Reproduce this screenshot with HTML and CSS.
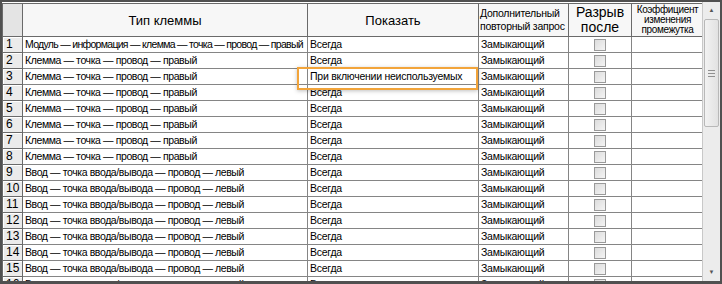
FILE: index.html
```html
<!DOCTYPE html>
<html lang="ru">

<head>
    <meta charset="UTF-8">
    <title>Типы клемм</title>
    <link rel="stylesheet" href="styles.css">
</head>

<body>
    <div class="frame">
        <div class="grid-area">
            <table class="grid">
                <colgroup>
                    <col class="c-num">
                    <col class="c-type">
                    <col class="c-show">
                    <col class="c-extra">
                    <col class="c-break">
                    <col class="c-coef">
                </colgroup>
                <thead>
                    <tr>
                        <th class="corner"></th>
                        <th class="h-big">Тип клеммы</th>
                        <th class="h-big">Показать</th>
                        <th class="h-small">Дополнительный<br>повторный запрос</th>
                        <th class="h-big h-break">Разрыв<br>после</th>
                        <th class="h-tiny">Коэффициент<br>изменения<br>промежутка</th>
                    </tr>
                </thead>
                <tbody id="rows"></tbody>
            </table>
            <div class="highlight"></div>
        </div>
        <div class="scrollbar">
            <div class="sb-btn">&#9650;</div>
            <div class="sb-thumb"><span class="grip"></span></div>
            <div class="sb-track"></div>
            <div class="sb-btn">&#9660;</div>
        </div>
    </div>

    <script>
        var rows = [
            ['Модуль — информация — клемма — точка — провод — правый', 'Всегда'],
            ['Клемма — точка — провод — правый', 'Всегда'],
            ['Клемма — точка — провод — правый', 'При включении неиспользуемых'],
            ['Клемма — точка — провод — правый', 'Всегда'],
            ['Клемма — точка — провод — правый', 'Всегда'],
            ['Клемма — точка — провод — правый', 'Всегда'],
            ['Клемма — точка — провод — правый', 'Всегда'],
            ['Клемма — точка — провод — правый', 'Всегда'],
            ['Ввод — точка ввода/вывода — провод — левый', 'Всегда'],
            ['Ввод — точка ввода/вывода — провод — левый', 'Всегда'],
            ['Ввод — точка ввода/вывода — провод — левый', 'Всегда'],
            ['Ввод — точка ввода/вывода — провод — левый', 'Всегда'],
            ['Ввод — точка ввода/вывода — провод — левый', 'Всегда'],
            ['Ввод — точка ввода/вывода — провод — левый', 'Всегда'],
            ['Ввод — точка ввода/вывода — провод — левый', 'Всегда'],
            ['Ввод — точка ввода/вывода — провод — левый', 'Всегда']
        ];

        var body = document.getElementById('rows');
        rows.forEach(function (r, i) {
            var tr = document.createElement('tr');
            var typeClass = r[0].length > 45 ? 'type tight' : 'type';
            tr.innerHTML =
                '<td class="num">' + (i + 1) + '</td>' +
                '<td class="' + typeClass + '">' + r[0] + '</td>' +
                '<td>' + r[1] + '</td>' +
                '<td>Замыкающий</td>' +
                '<td class="chk"><span class="box"></span></td>' +
                '<td></td>';
            body.appendChild(tr);
        });
    </script>
</body>

</html>
```

FILE: styles.css
```css
body {
    margin: 0;
    background: #ffffff;
    font-family: "Liberation Sans", Arial, sans-serif;
}

.frame {
    width: 718px;
    height: 279px;
    border: 2px solid #505050;
    border-bottom-width: 3px;
    background: #ffffff;
    display: flex;
    overflow: hidden;
}

.grid-area {
    position: relative;
    width: 701px;
    overflow: hidden;
}

.grid {
    border-collapse: collapse;
    table-layout: fixed;
    width: 702px;
    margin-top: 1px;
}

.c-num { width: 20px; }
.c-type { width: 285px; }
.c-show { width: 171px; }
.c-extra { width: 90px; }
.c-break { width: 63px; }
.c-coef { width: 72px; }

.grid th {
    height: 31px;
    padding: 0;
    border: 1px solid #6a6a6a;
    background: #f7f7f7;
    font-weight: normal;
    color: #000000;
    text-align: center;
    white-space: nowrap;
    overflow: hidden;
}

.grid th.corner {
    background: #e4e4e4;
}

.h-big {
    font-size: 13px;
    line-height: 15px;
}

.grid th.h-break {
    font-size: 14px;
}

.grid th.h-small {
    font-size: 10.5px;
    letter-spacing: -0.25px;
    text-align: left;
    line-height: 13px;
    padding-left: 1px;
}

.grid th.h-tiny {
    font-size: 10px;
    letter-spacing: -0.35px;
    line-height: 10px;
    vertical-align: top;
    padding-top: 1px;
}

.grid td {
    height: 15px;
    padding: 0 0 0 2px;
    border: 1px solid #858585;
    font-size: 10.5px;
    letter-spacing: -0.25px;
    color: #000000;
    white-space: nowrap;
    overflow: hidden;
    line-height: 15px;
}

.grid td.type {
    letter-spacing: -0.4px;
}

.grid td.tight {
    letter-spacing: -0.7px;
}

.grid td.num {
    background: #ebebeb;
    border-color: #6a6a6a;
    box-shadow: inset 1px 1px 0 #ffffff;
    font-size: 12px;
    letter-spacing: 0;
    padding-left: 3px;
}

.grid td.chk {
    text-align: center;
    padding: 0;
}

.box {
    display: inline-block;
    width: 10px;
    height: 10px;
    margin-top: 2px;
    vertical-align: top;
    border: 1px solid #9a9a9a;
    background: linear-gradient(to bottom right, #dcdcdc, #f4f4f4);
}

.highlight {
    position: absolute;
    left: 295px;
    top: 65px;
    width: 177px;
    height: 19px;
    border: 2px solid #f2a43a;
    box-shadow: 0 1px 4px rgba(0, 0, 0, 0.25);
}

.scrollbar {
    width: 17px;
    border-left: 1px solid #c8c8c8;
    background: #ececec;
    display: flex;
    flex-direction: column;
}

.sb-btn {
    height: 17px;
    font-size: 6px;
    color: #555555;
    text-align: center;
    line-height: 17px;
}

.sb-thumb {
    height: 106px;
    margin: 0 1px;
    border: 1px solid #b8b8b8;
    border-radius: 2px;
    background: linear-gradient(to right, #f2f2f2, #e2e2e2);
    display: flex;
    align-items: center;
    justify-content: center;
}

.grip {
    width: 7px;
    height: 5px;
    border-top: 1px solid #909090;
    border-bottom: 1px solid #909090;
    background: linear-gradient(#909090, #909090) center / 7px 1px no-repeat;
}

.sb-track {
    flex: 1;
}
```
